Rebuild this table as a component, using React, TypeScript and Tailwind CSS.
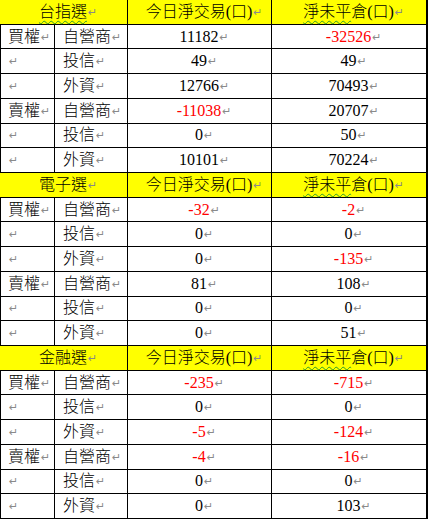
import React from "react";

const sections: { title: string; rows: [string, string, string, string][] }[] = [
  {
    title: "台指選",
    rows: [
      ["買權", "自營商", "11182", "-32526"],
      ["", "投信", "49", "49"],
      ["", "外資", "12766", "70493"],
      ["賣權", "自營商", "-11038", "20707"],
      ["", "投信", "0", "50"],
      ["", "外資", "10101", "70224"],
    ],
  },
  {
    title: "電子選",
    rows: [
      ["買權", "自營商", "-32", "-2"],
      ["", "投信", "0", "0"],
      ["", "外資", "0", "-135"],
      ["賣權", "自營商", "81", "108"],
      ["", "投信", "0", "0"],
      ["", "外資", "0", "51"],
    ],
  },
  {
    title: "金融選",
    rows: [
      ["買權", "自營商", "-235", "-715"],
      ["", "投信", "0", "0"],
      ["", "外資", "-5", "-124"],
      ["賣權", "自營商", "-4", "-16"],
      ["", "投信", "0", "0"],
      ["", "外資", "0", "103"],
    ],
  },
];

function Mark({ zero }: { zero?: boolean }) {
  return (
    <span
      className={
        (zero ? "inline-block w-0 " : "inline-block ") +
        "whitespace-nowrap pl-px align-[1px] font-['DejaVu_Sans',sans-serif] text-[11px] font-normal leading-none text-[#8a8a8a]"
      }
    >
      ↵
    </span>
  );
}

function Squiggle({ children }: { children: React.ReactNode }) {
  return (
    <span className="underline decoration-wavy decoration-[#2a9a2a] decoration-1 underline-offset-[3px]">
      {children}
    </span>
  );
}

export default function App() {
  return (
    <div className="h-[519px] w-[428px] bg-white font-['Liberation_Serif','Noto_Sans_CJK_TC',serif] text-[16px] font-light leading-none text-black">
      <div className="grid h-[519px] grid-cols-[55px_73px_144px_156px] grid-rows-[repeat(21,minmax(0,1fr))]">
        {sections.map((s, si) => (
          <React.Fragment key={si}>
            <div className="col-span-2 flex items-center justify-center border-r border-b border-black bg-[#ffff00]">
              <span>
                {si === 0 ? <Squiggle>{s.title}</Squiggle> : s.title}
                <Mark zero />
              </span>
            </div>
            <div className="flex items-center justify-center border-r border-b border-black bg-[#ffff00]">
              <span>
                今日淨交易(口)
                <Mark zero />
              </span>
            </div>
            <div className="flex items-center justify-center border-r-2 border-b border-black bg-[#ffff00]">
              <span>
                <Squiggle>淨未平</Squiggle>倉(口)
                <Mark zero />
              </span>
            </div>
            {s.rows.map((r, ri) => (
              <React.Fragment key={ri}>
                <div className="flex items-center border-l border-r border-b border-black pl-[7px]">
                  <span>
                    {r[0]}
                    <Mark />
                  </span>
                </div>
                <div className="flex items-center border-r border-b border-black pl-[8px]">
                  <span>
                    {r[1]}
                    <Mark />
                  </span>
                </div>
                <div className="flex items-center justify-center border-r border-b border-black">
                  <span className={r[2].startsWith("-") ? "text-[#ff0000]" : ""}>
                    {r[2]}
                    <Mark zero />
                  </span>
                </div>
                <div className="flex items-center justify-center border-r-2 border-b border-black">
                  <span className={r[3].startsWith("-") ? "text-[#ff0000]" : ""}>
                    {r[3]}
                    <Mark zero />
                  </span>
                </div>
              </React.Fragment>
            ))}
          </React.Fragment>
        ))}
      </div>
    </div>
  );
}
